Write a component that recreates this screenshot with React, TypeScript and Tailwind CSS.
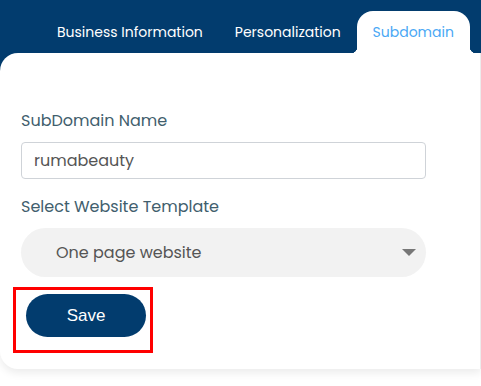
import { useState } from "react";

const tabs = ["Business Information", "Personalization", "Subdomain"];

function Tab({ label, active, onClick }: { label: string; active: boolean; onClick: () => void }) {
  if (!active) {
    return (
      <button onClick={onClick} className="h-[42px] px-4 text-[14px] leading-[42px] text-white">
        {label}
      </button>
    );
  }
  return (
    <button
      onClick={onClick}
      className="relative h-[42px] w-[113px] rounded-t-[16px] bg-white text-[14px] leading-[42px] text-[#4aa8f5]"
    >
      {label}
      {/* inverted corners */}
      <span className="absolute bottom-0 -left-[6px] h-[6px] w-[6px] bg-[radial-gradient(circle_at_0_0,transparent_6px,#fff_6.5px)]" />
      <span className="absolute bottom-0 -right-[6px] h-[6px] w-[6px] bg-[radial-gradient(circle_at_100%_0,transparent_6px,#fff_6.5px)]" />
    </button>
  );
}

export default function App() {
  const [active, setActive] = useState("Subdomain");
  const [name, setName] = useState("rumabeauty");

  return (
    <div className="h-[386px] w-[481px] overflow-hidden bg-[linear-gradient(#023c6e_0_80px,#fff_80px)] font-['Poppins','Inter',sans-serif]">
      {/* Tabs */}
      <div className="flex h-[53px] items-end pl-[41px]">
        <div className="flex items-end gap-0">
          {tabs.map((t) => (
            <Tab key={t} label={t} active={t === active} onClick={() => setActive(t)} />
          ))}
        </div>
      </div>

      {/* Card */}
      <div className="h-[316px] rounded-tl-[18px] rounded-bl-[18px] border-r border-[#ececec] bg-white pl-[21px] pt-[57px] shadow-[0_4px_8px_rgba(0,0,0,0.08)]">
        <label className="block text-[16px] leading-[22px] text-[#415e6d]">SubDomain Name</label>
        <input
          value={name}
          onChange={(e) => setName(e.target.value)}
          className="mt-[10px] h-[37px] w-[405px] rounded-[4px] border border-[#cfd3d8] px-[12px] text-[16px] text-[#555] outline-none"
        />

        <label className="mt-[17px] block text-[16px] leading-[22px] text-[#415e6d]">Select Website Template</label>
        <div className="relative mt-[10px] flex h-[49px] w-[405px] items-center rounded-full bg-[#f2f2f2] pl-[35px] text-[16px] text-[#555]">
          One page website
          <svg className="absolute right-[10px] top-[21px]" width="14" height="8" viewBox="0 0 14 8">
            <path d="M0 0h14L7 7z" fill="#777" />
          </svg>
        </div>

        <div className="-ml-[8px] mt-[10px] w-[140px] border-[3px] border-[#ff0000] pb-[13px] pl-[10px] pt-[4px]">
          <button className="h-[43px] w-[120px] rounded-full bg-[#023c6e] font-['Liberation_Sans',Arial,sans-serif] text-[17px] text-white">
            Save
          </button>
        </div>
      </div>
    </div>
  );
}
